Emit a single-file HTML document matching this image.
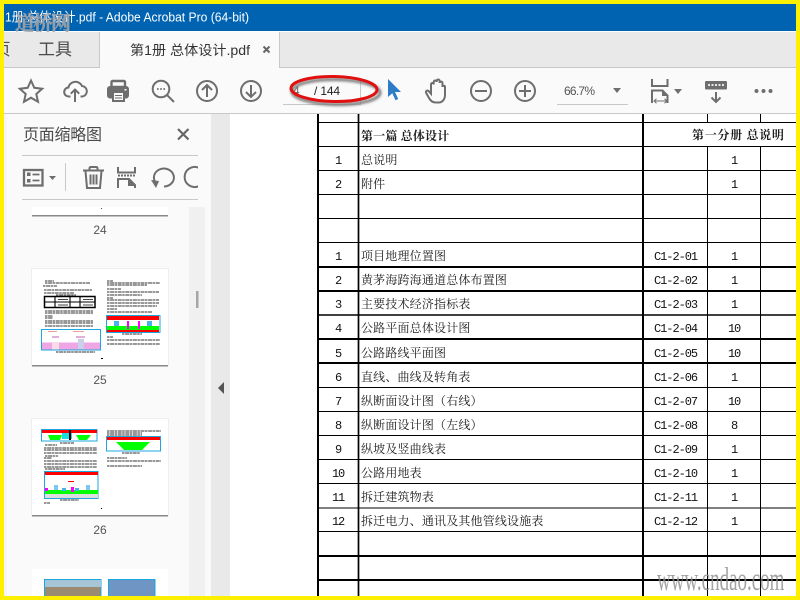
<!DOCTYPE html>
<html><head><meta charset="utf-8"><style>
html,body{margin:0;padding:0;width:800px;height:600px;overflow:hidden;background:#fff}
svg{display:block}
text{font-family:"Liberation Sans","Noto Sans CJK SC",sans-serif}
.t{font-family:"Liberation Serif","Noto Serif CJK SC",serif;font-size:12px;fill:#1c1c1c;letter-spacing:.17px}
.n{font-family:"Liberation Mono",monospace;font-size:12px;fill:#111;text-anchor:middle;letter-spacing:-1.2px}
.c{font-family:"Liberation Mono",monospace;font-size:12px;fill:#111;letter-spacing:-1.05px}
.i{fill:none;stroke:#6e6e6e;stroke-width:2}
.d{fill:#6e6e6e}
.l{stroke:#333;stroke-width:1;stroke-dasharray:2.5 .6 4 .5;fill:none}
</style></head><body>
<svg width="800" height="600" viewBox="0 0 800 600" xmlns="http://www.w3.org/2000/svg">
<defs>
<clipPath id="tb"><rect x="4" y="0" width="792" height="32"/></clipPath>
<clipPath id="tt"><rect x="4" y="32" width="96" height="36"/></clipPath>
<clipPath id="ti"><rect x="20" y="160" width="178" height="36"/></clipPath>
<clipPath id="th"><rect x="7" y="207" width="200" height="389"/></clipPath>
<filter id="s" x="-20%" y="-30%" width="140%" height="170%"><feGaussianBlur stdDeviation="1.2"/></filter>
<filter id="b" x="-5%" y="-5%" width="110%" height="110%"><feGaussianBlur stdDeviation=".35"/></filter>
</defs>

<rect width="800" height="600" fill="#ffef00"/>
<rect x="4" y="4" width="792" height="592" fill="#fff"/>
<!-- title bar -->
<rect x="4" y="4" width="792" height="27" fill="#0063b1"/>
<text x="5" y="21.500" font-size="13" fill="#fff" textLength="244" lengthAdjust="spacingAndGlyphs" clip-path="url(#tb)">1册 总体设计.pdf - Adobe Acrobat Pro (64-bit)</text>
<text x="15" y="30" font-size="20" fill="#a4a8ae" fill-opacity=".85" stroke="#9a9ea4" stroke-width=".5" stroke-opacity=".85" textLength="56" style="font-family:'Noto Serif CJK SC',serif;font-weight:700">道桥网</text>
<!-- tab bar -->
<rect x="4" y="32" width="792" height="36" fill="#e9e9e9"/>
<rect x="4" y="67" width="792" height="1" fill="#c8c8c8"/>
<rect x="99" y="32" width="1" height="36" fill="#c8c8c8"/>
<rect x="100" y="32" width="179" height="36" fill="#fafafa"/>
<rect x="279" y="32" width="1" height="36" fill="#c8c8c8"/>
<g clip-path="url(#tt)"><text x="-6" y="55" font-size="16.500" fill="#4b4b4b">页</text></g>
<text x="38" y="55" font-size="17" fill="#4b4b4b">工具</text>
<text x="130" y="55" font-size="13.400" fill="#333" textLength="120" lengthAdjust="spacingAndGlyphs">第1册 总体设计.pdf</text>
<path d="M263.500 46.500l6 6m0-6l-6 6" stroke="#666" stroke-width="2" fill="none"/>
<!-- toolbar -->
<rect x="4" y="68" width="792" height="45" fill="#fafafa"/>
<rect x="4" y="113" width="792" height="1" fill="#c8c8c8"/>
<!-- star -->
<path class="i" d="M31 80.500l3.300 7.300 7.900.9-5.900 5.300 1.700 7.700-7-4-7 4 1.700-7.700-5.900-5.300 7.900-.9z" stroke-width="1.600"/>
<!-- cloud upload -->
<path class="i" d="M70.500 96.500h-1.500a4.500 4.500 0 0 1-.6-9 7.200 7.200 0 0 1 13.600-1.500 5.300 5.300 0 0 1 .5 10.500h-2" stroke-width="1.900"/>
<path class="i" d="M75 102V89.500m-4.200 4.200l4.200-4.200 4.200 4.200" stroke-width="1.900"/>
<!-- printer -->
<rect x="111.500" y="81" width="13.500" height="6" rx="1" fill="none" stroke="#6e6e6e" stroke-width="2.400"/>
<rect x="107" y="86" width="22" height="12.500" rx="3" fill="#6e6e6e"/>
<rect x="113" y="92" width="11" height="9" fill="#fafafa" stroke="#6e6e6e" stroke-width="2"/>
<path d="M115 95.500h7M115 98h7" stroke="#6e6e6e" stroke-width="1"/>
<rect x="124.500" y="89" width="2" height="1.500" fill="#fff"/>
<!-- search -->
<circle class="i" cx="161" cy="89" r="8.300" stroke-width="2.200"/>
<path class="i" d="M167.200 95.200L174 102" stroke-width="2.600"/>
<path d="M157 89h1.600M160.200 89h1.600M163.400 89h1.600" stroke="#6e6e6e" stroke-width="1.800"/>
<!-- up/down -->
<circle class="i" cx="207" cy="91" r="10"/><path class="i" d="M207 97V85m-5 5l5-5 5 5"/>
<circle class="i" cx="251" cy="91" r="10"/><path class="i" d="M251 85v12m-5-5l5 5 5-5"/>
<!-- page input -->
<rect x="283" y="104" width="77" height="1" fill="#c8c8c8"/>
<rect x="360" y="80" width="1" height="25" fill="#c8c8c8"/>
<text x="293" y="95" font-size="12" fill="#666">4</text>
<text x="314" y="95" font-size="12" fill="#222" textLength="26">/ 144</text>
<!-- red oval -->
<ellipse cx="336" cy="92" rx="44" ry="12.500" fill="none" stroke="#777" stroke-width="3" filter="url(#s)" transform="rotate(1 336 92)"/>
<ellipse cx="334" cy="89" rx="43" ry="12.500" fill="none" stroke="#e01010" stroke-width="3" transform="rotate(1 334 89)"/>
<!-- cursor -->
<path fill="#2d7cc8" d="M388 79l13 13h-6l3.200 7-2.700 1.200-3.200-7-4.300 3.800z"/>
<!-- hand -->
<path class="i" d="M436 102.500c-3.500 0-5.500-1.500-7-4.500l-2.800-5c-1-2 1.300-3.200 2.600-1.800l2.200 2.500V84.500c0-2 2.700-2 2.700 0v-2.500c0-2 3-2 3 0v-1c0-2 3-2 3 0v2c0-1.800 2.800-1.800 2.800 0v4c0-1.700 2.500-1.700 2.500 0V95c0 4.500-3 7.500-6 7.500z" stroke-width="1.700"/>
<!-- zoom -->
<circle class="i" cx="481" cy="91" r="10"/><path class="i" d="M475 91h12"/>
<circle class="i" cx="525" cy="91" r="10"/><path class="i" d="M519 91h12M525 85v12"/>
<text x="564" y="95" font-size="12" fill="#555" textLength="31">66.7%</text>
<path class="d" d="M613 88h8l-4 5z"/>
<rect x="557" y="104" width="71" height="1" fill="#c8c8c8"/>
<!-- fit width -->
<path class="i" d="M652 79v7h15.500v-7"/>
<path class="i" d="M652 103V90.500h10.500l5 5V103"/>
<path class="d" d="M662 90l6 6h-6z"/>
<path d="M654 101h13M656.500 98.800l-2.500 2.200 2.500 2.200M664.500 98.800l2.500 2.200-2.500 2.200" stroke="#6e6e6e" stroke-width="1" fill="none"/>
<path class="d" d="M674 89h8l-4 5z"/>
<!-- keyboard -->
<rect x="705" y="81" width="22" height="8.500" rx="1" fill="#6e6e6e"/>
<path d="M708 85h16" stroke="#e6e6e6" stroke-width="2" stroke-dasharray="2 1.500"/>
<path class="i" d="M716 92v9m-4.500-3.500l4.500 4.500 4.500-4.500" stroke-width="2.200"/>
<!-- dots -->
<circle class="d" cx="756.500" cy="91" r="2"/><circle class="d" cx="763.500" cy="91" r="2"/><circle class="d" cx="770.500" cy="91" r="2"/>

<!-- side panel -->
<rect x="4" y="114" width="3" height="482" fill="#f4f4f4"/>
<rect x="7" y="114" width="205" height="482" fill="#fafafa"/>
<rect x="211" y="114" width="19" height="482" fill="#e9e9e9"/>
<path d="M224 382v12l-6-6z" fill="#555"/>
<text x="23" y="140" font-size="16" fill="#4b4b4b" textLength="79">页面缩略图</text>
<path d="M178 129l10.500 10.500m0-10.500L178 139.500" stroke="#666" stroke-width="2.200" fill="none"/>
<rect x="22" y="155" width="176" height="1" fill="#c8c8c8"/>
<rect x="22" y="199" width="176" height="1" fill="#c8c8c8"/>
<rect x="65" y="163" width="1" height="28" fill="#c8c8c8"/>
<g clip-path="url(#ti)">
<rect x="24" y="170" width="18.500" height="15.500" fill="none" stroke="#6e6e6e" stroke-width="2.300"/>
<rect x="27" y="172.500" width="3.500" height="3.500" class="d"/><rect x="27" y="179" width="3.500" height="3.500" class="d"/>
<path d="M32.500 174.500h7M32.500 180.500h7" stroke="#6e6e6e" stroke-width="1.800"/>
<path class="d" d="M49 176h7l-3.500 4z"/>
<path class="i" d="M83 170.500h21M89.500 170v-2a1.500 1.500 0 0 1 1.500-1h5a1.500 1.500 0 0 1 1.500 1v2M85.500 171l1.500 17h13l1.500-17M90.500 174.500v10M93.500 174.500v10M96.500 174.500v10" stroke-width="1.900"/>
<path class="i" d="M118 167v5.500h17V167M118 188v-9h11l6 6v3"/>
<path d="M118 175.500h18" stroke="#6e6e6e" stroke-width="2" stroke-dasharray="2 1"/>
<path class="d" d="M128 179l7 7h-7z"/>
<path class="i" d="M156 183a10 9 0 1 1 8 3.500" stroke-width="2.300"/>
<path class="d" d="M151 180l8 1-3 7z"/>
<path class="i" d="M199 168a10 10 0 1 0 0 18" stroke-width="2.300"/>
</g>
<rect x="189" y="207" width="16" height="389" fill="#f0f0f0"/>
<rect x="196" y="291" width="2.500" height="17" fill="#a6a6a6"/>
<g clip-path="url(#th)">
<rect x="32" y="200" width="136" height="15" fill="#fff"/>
<rect x="32" y="215" width="136" height="1.500" fill="#888"/>
<rect x="101" y="208" width="1" height="1" fill="#555"/>
<text x="100" y="234" font-size="12" fill="#555" text-anchor="middle">24</text>
<!-- page 25 -->
<rect x="31.500" y="268.500" width="137" height="97" fill="#fff" stroke="#eee"/>
<rect x="32" y="365" width="136" height="1.500" fill="#888"/>
<g filter="url(#b)">
<path class="l" d="M45 281h9M45 283h45M43 286h14M44 290h48M44 293h30M56 295h20"/>
<path class="l" d="M45 311h48M45 313h48M45 316h8M45 318h8M45 321h48M45 323h48M45 326h48"/>
<path class="l" d="M107 281h6M107 283h53M107 285h40M107 289h14M107 292h52M107 295h35M107 298h6M107 300h52M107 303h52M107 306h50M107 309h10M107 312h45"/>
<path class="l" d="M107 337h6M107 340h53M107 344h53M56 352h39M122 334h20"/>
<rect x="44.500" y="296.500" width="50.500" height="11" fill="#fff" stroke="#000" stroke-width="1.500"/>
<path d="M44 302h51M55 296v12M70 296v12M80 296v12" stroke="#000" stroke-width="1.100"/>
<path d="M58 299.500h10M83 299.500h10M58 305h10M83 305h10" stroke="#444" stroke-width="1"/>
<rect x="41.500" y="329.500" width="59" height="20.500" fill="#fff" stroke="#1aa7e0"/>
<rect x="42" y="342.500" width="58" height="7" fill="#efa6e4"/>
<path d="M48 331.500h9M73 331.500h11" stroke="#f39a9a"/><path d="M52 337h7M76 337h9" stroke="#e0b0d9" stroke-width="2"/>
<rect x="52" y="342" width="7" height="7.500" fill="#f8dce8"/><rect x="78" y="339" width="6" height="10" fill="#c8d0ea"/>
<rect x="106.500" y="315.500" width="53.500" height="17" fill="#fff" stroke="#1aa7e0"/>
<rect x="107" y="316" width="52" height="4" fill="#f00"/>
<rect x="107" y="326" width="52" height="4" fill="#0f0"/>
<rect x="107" y="330" width="52" height="2" fill="#f00"/>
<rect x="114" y="321" width="5" height="5" fill="#4ab3e8"/><rect x="147" y="321" width="5" height="5" fill="#4ab3e8"/><rect x="127" y="321" width="2" height="8" fill="#f0f"/><rect x="138" y="321" width="2" height="8" fill="#f0f"/>
</g>
<rect x="101" y="358" width="2" height="1" fill="#000"/>
<text x="100" y="384" font-size="12" fill="#555" text-anchor="middle">25</text>
<!-- page 26 -->
<rect x="31.500" y="418.500" width="137" height="97" fill="#fff" stroke="#eee"/>
<rect x="32" y="515" width="136" height="1.500" fill="#888"/>
<g filter="url(#b)">
<rect x="41.500" y="429.500" width="55.500" height="11.500" fill="#fff" stroke="#1aa7e0"/>
<rect x="42" y="430" width="55" height="3" fill="#f00"/>
<path d="M48 435h14l-2 5h-10zM76 435h15l-4 5h-8z" fill="#0f0"/><rect x="62" y="433" width="10" height="6" fill="#1fdede"/><rect x="69" y="430" width="2" height="10" fill="#000"/>
<rect x="106.500" y="436.500" width="54" height="14.500" fill="#fff" stroke="#1aa7e0"/>
<rect x="107" y="437" width="53" height="3" fill="#f00"/>
<path d="M116 442h34l-8 8h-18z" fill="#0f0"/>
<path class="l" d="M60 443h14M45 445h12M44 448h53M44 450h53M44 453h53M45 456h13M44 458h8M44 461h53M44 464h53M44 467h53M45 469h20"/>
<path class="l" d="M107 431h54M107 433h35M107 435h35M122 453h18M107 458h20M107 461h54M107 466h35"/>
<path class="l" d="M60 500h19M44 503h6"/>
<rect x="44.500" y="471.500" width="53.500" height="27" fill="#fff" stroke="#1aa7e0"/>
<rect x="45" y="472" width="53" height="3" fill="#f00"/>
<rect x="45" y="490" width="53" height="4" fill="#0f0"/>
<rect x="45" y="494" width="53" height="4" fill="#ddd"/>
<rect x="54" y="485" width="4" height="5" fill="#7cc8ef"/><rect x="62" y="488" width="4" height="3" fill="#4ab3e8"/><rect x="75" y="488" width="4" height="3" fill="#4ab3e8"/><rect x="86" y="485" width="4" height="5" fill="#7cc8ef"/>
<rect x="45" y="488" width="3" height="3" fill="#f0f"/><rect x="71" y="487" width="3" height="5" fill="#f0f"/>
<rect x="68" y="481" width="6" height="1" fill="#f00"/>
</g>
<rect x="101" y="508" width="1" height="1" fill="#000"/>
<text x="100" y="534" font-size="12" fill="#555" text-anchor="middle">26</text>
<!-- page 27 -->
<rect x="32" y="569" width="136" height="40" fill="#fff"/>
<rect x="44.500" y="579.500" width="56.500" height="20" fill="#9b8b70" stroke="#1aa7e0"/>
<rect x="45" y="580" width="56" height="7" fill="#a6c6d8"/>
<rect x="108.500" y="579.500" width="46.500" height="20" fill="#6f95c4" stroke="#1aa7e0"/>
</g>

<!-- table -->
<g stroke="#000" fill="none">
<path stroke-width="2" d="M318 114V596M643 114V596"/>
<path stroke-width="1.700" d="M358.500 114V596"/>
<path stroke-width="1" d="M707.500 114V122M760.500 114V122M707.500 146V596M760.500 146V596"/>
<path stroke-width="1" d="M318 122.500H796M318 146.500H796M318 170.500H796M318 194.500H796M318 218.500H796M318 242.500H796M318 387.500H796M318 411.500H796M318 435.500H796M318 459.500H796M318 483.500H796M318 508H796M318 531.500H796"/>
<path stroke-width="2" d="M318 267H796M318 291H796M318 339H796M318 363H796M318 556H796M318 580H796"/>
<path stroke-width="1.500" d="M318 315H796"/>
</g>
<text class="t" x="361" y="140" font-weight="700">第一篇 总体设计</text>
<text class="t" x="692" y="139" font-weight="700" textLength="92">第一分册 总说明</text>
<g>
<text class="n" x="338" y="164">1</text><text class="t" x="361" y="164">总说明</text><text class="n" x="734" y="164">1</text>
<text class="n" x="338" y="188">2</text><text class="t" x="361" y="188">附件</text><text class="n" x="734" y="188">1</text>
<text class="n" x="338" y="260">1</text><text class="t" x="361" y="260">项目地理位置图</text><text class="c" x="654" y="260">C1-2-01</text><text class="n" x="734" y="260">1</text>
<text class="n" x="338" y="284">2</text><text class="t" x="361" y="284">黄茅海跨海通道总体布置图</text><text class="c" x="654" y="284">C1-2-02</text><text class="n" x="734" y="284">1</text>
<text class="n" x="338" y="308">3</text><text class="t" x="361" y="308">主要技术经济指标表</text><text class="c" x="654" y="308">C1-2-03</text><text class="n" x="734" y="308">1</text>
<text class="n" x="338" y="332">4</text><text class="t" x="361" y="332">公路平面总体设计图</text><text class="c" x="654" y="332">C1-2-04</text><text class="n" x="734" y="332">10</text>
<text class="n" x="338" y="357">5</text><text class="t" x="361" y="357">公路路线平面图</text><text class="c" x="654" y="357">C1-2-05</text><text class="n" x="734" y="357">10</text>
<text class="n" x="338" y="381">6</text><text class="t" x="361" y="381">直线、曲线及转角表</text><text class="c" x="654" y="381">C1-2-06</text><text class="n" x="734" y="381">1</text>
<text class="n" x="338" y="405">7</text><text class="t" x="361" y="405">纵断面设计图（右线）</text><text class="c" x="654" y="405">C1-2-07</text><text class="n" x="734" y="405">10</text>
<text class="n" x="338" y="429">8</text><text class="t" x="361" y="429">纵断面设计图（左线）</text><text class="c" x="654" y="429">C1-2-08</text><text class="n" x="734" y="429">8</text>
<text class="n" x="338" y="453">9</text><text class="t" x="361" y="453">纵坡及竖曲线表</text><text class="c" x="654" y="453">C1-2-09</text><text class="n" x="734" y="453">1</text>
<text class="n" x="338" y="477">10</text><text class="t" x="361" y="477">公路用地表</text><text class="c" x="654" y="477">C1-2-10</text><text class="n" x="734" y="477">1</text>
<text class="n" x="338" y="501">11</text><text class="t" x="361" y="501">拆迁建筑物表</text><text class="c" x="654" y="501">C1-2-11</text><text class="n" x="734" y="501">1</text>
<text class="n" x="338" y="525">12</text><text class="t" x="361" y="525">拆迁电力、通讯及其他管线设施表</text><text class="c" x="654" y="525">C1-2-12</text><text class="n" x="734" y="525">1</text>
</g>
<text transform="translate(657 590) scale(1 1.7)" font-size="19" fill="#8c8c8c" fill-opacity=".8" style="font-family:'Liberation Serif',serif">www.cndao.com</text>
</svg>
</body></html>
